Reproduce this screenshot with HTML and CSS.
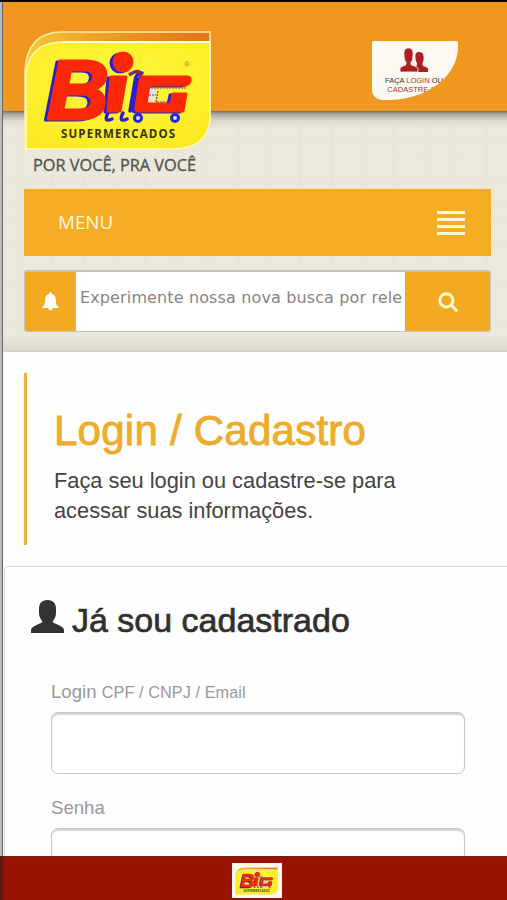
FILE: index.html
```html
<!DOCTYPE html>
<html lang="pt-BR">
<head>
<meta charset="utf-8">
<title>Big Supermercados</title>
<link rel="stylesheet" href="styles.css">
</head>
<body>
<svg width="0" height="0" class="defs">
  <defs>
    <linearGradient id="rim" x1="0" x2="1"><stop offset="0" stop-color="#f5c934"/><stop offset=".45" stop-color="#ed9a24"/><stop offset="1" stop-color="#df741b"/></linearGradient>
    <radialGradient id="badge" cx=".5" cy=".35" r=".75"><stop offset="0" stop-color="#fff83c"/><stop offset="1" stop-color="#fcea20"/></radialGradient>
    <g id="word">
      <text x="23" y="88" font-size="83" textLength="62" lengthAdjust="spacingAndGlyphs">B</text>
      <path d="M87 46H102L96 80H84Z"/>
      <circle cx="99" cy="31" r="9"/>
      <path d="M120 46H163Q167 46 166 50Q165 54 161 54H126L122 73H147L149 63H162L159 80H114Q111 80 112 76L116 50Q117 46 120 46Z"/>
    </g>
    <symbol id="logo" viewBox="0 0 188 120">
      <path d="M1 118V40Q3 1 38 1H186V88Q184 118 148 118Z" fill="url(#rim)" stroke="#fff0a0" stroke-width="1.5"/>
      <path d="M2 118V42Q6 11 39 11H186V88Q184 118 148 118Z" fill="url(#badge)" stroke="#fff8c0" stroke-width="1.5"/>
      <path d="M39 11H185" stroke="#fffef0" stroke-width="2"/>
      <g class="word-shadow"><use href="#word" x="-3" y="1"/></g>
      <path d="M106 80L111 50Q112 42 118 42M84 82Q79 92 88 88M99 82Q94 92 103 88" fill="none" stroke="#2a1fcf" stroke-width="3.5" stroke-linecap="round"/>
      <path d="M105 44Q117 36 117 46" fill="none" stroke="#8e2560" stroke-width="3.5"/>
      <g class="word-face"><use href="#word"/></g>
      <path d="M126 57H132L130 71H124Z" fill="#e9e2e8"/>
      <path d="M127 57H163M134 60L132 71H148M125 64H132" fill="none" stroke="#6b3bb0" stroke-width="1.2" stroke-dasharray="2 1"/>
      <circle cx="114" cy="87" r="3.5" fill="#d7dafc" stroke="#2525dd" stroke-width="3"/>
      <circle cx="151" cy="87" r="3.5" fill="#d7dafc" stroke="#2525dd" stroke-width="3"/>
      <text class="trade" x="160" y="36">®</text>
      <text class="market" x="37" y="107" textLength="114">SUPERMERCADOS</text>
    </symbol>
    <symbol id="person" viewBox="0 0 33 33">
      <path d="M16.5 0C11 0 8 3.5 8 8.5V13C8 17 10 19.500 11.500 21.500C11 24 0 25.500 0 30V33H33V30C33 25.500 22 24 21.500 21.500C23 19.500 25 17 25 13V8.500C25 3.500 22 0 16.500 0Z"/>
    </symbol>
  </defs>
</svg>
<div class="screen">
  <header class="header">
    <div class="banner">
      <div class="brand">
        <svg class="logo"><use href="#logo"/></svg>
        <svg class="tagline" viewBox="0 0 188 26"><text x="9" y="18" textLength="163" lengthAdjust="spacingAndGlyphs">POR VOCÊ, PRA VOCÊ</text></svg>
      </div>
      <a class="account">
        <svg class="people" viewBox="0 0 28 25">
          <path d="M19 4C16 4 15 6 15.500 10C15.500 13 16.500 14 17 15V17C16 18 16 19 16 24H28V21C28 19 22.500 18.500 22.500 17V15C23.500 13 24 11 23.500 8C23.500 5 21.500 4 19 4Z"/>
          <path class="front" d="M8.500 0C5 0 3.500 2.500 4 7C4 11 5 13 6 14V16.500C5 18 0 18 0 21V24H18V21C18 18 12 18 11 16.500V14C12.500 13 13 11 13 7C13.500 2.500 12 0 8.500 0Z"/>
        </svg>
        <span>FAÇA <em>LOGIN</em> OU</span>
        <em>CADASTRE-SE</em>
      </a>
    </div>
    <nav class="menu">
      <span class="label">MENU</span>
      <span class="bars"><i></i><i></i><i></i><i></i></span>
    </nav>
    <div class="search">
      <span class="bell"><svg viewBox="0 0 16 19"><path d="M8 0C6.800 0 6.600 1 6.700 2C4 2.500 2.500 5 2.500 8C2.500 12 2 13 0 14.500V16H16V14.500C14 13 13.500 12 13.500 8C13.500 5 12 2.500 9.300 2C9.400 1 9.200 0 8 0ZM5.500 16H10.500Q8 21 5.500 16Z"/></svg></span>
      <input type="text" placeholder="Experimente nossa nova busca por rele">
      <span class="find"><svg viewBox="0 0 20 20"><circle cx="8" cy="8" r="6.300"/><path d="M12.700 12.700L17.500 17.500"/></svg></span>
    </div>
  </header>
  <main>
    <section class="intro">
      <h1>Login / Cadastro</h1>
      <p>Faça seu login ou cadastre-se para<br>acessar suas informações.</p>
    </section>
    <section class="panel">
      <h2><svg class="user"><use href="#person"/></svg>Já sou cadastrado</h2>
      <form>
        <label for="login">Login <small>CPF / CNPJ / Email</small></label>
        <input id="login" type="text">
        <label for="senha">Senha</label>
        <input id="senha" type="password">
      </form>
    </section>
  </main>
  <footer class="footer"><span><svg><use href="#logo"/></svg></span></footer>
</div>
</body>
</html>
```
FILE: styles.css
```css
* { box-sizing: border-box; }
body { margin: 0; height: 900px; overflow: hidden; font-family: "Liberation Sans", Arial, sans-serif; color: #333; }
.defs { position: absolute; }
.screen {
  height: 900px; display: flex; flex-direction: column;
  border-top: 2px solid #0c0500; padding-left: 3px;
  background: linear-gradient(90deg, #bbb 2px, #666 2px, #666 3px, #fefefe 3px);
}
.header {
  height: 350px; flex: none; padding: 0 16px 0 21px;
  border-bottom: 1px solid #d2d1c5;
  background:
    linear-gradient(#f0951f, #f0981f) 0 0 / 100% 109px no-repeat,
    linear-gradient(#6c6a62, #aaa89d 3px, #dcdacd 10px, transparent 18px) 0 109px / 100% 30px no-repeat,
    linear-gradient(transparent 332px, #dad9cb 350px),
    repeating-linear-gradient(90deg, transparent 0 17px, #e1dfd150 18px 19px, transparent 20px 31px),
    repeating-linear-gradient(0deg, transparent 0 7px, #f1eee050 8px 9px, transparent 10px 13px),
    #eae8da;
}
.banner { height: 187px; display: flex; justify-content: space-between; align-items: flex-start; }
.brand { padding-top: 29px; width: 188px; }
.brand svg { display: block; width: 188px; }
.logo { height: 120px; }
.tagline { height: 26px; margin-top: 2px; font: 17px "Open Sans", sans-serif; fill: #55554f; stroke: #55554f; stroke-width: .35; }
.word-shadow, .word-face { font-family: "Liberation Sans", Arial, sans-serif; font-weight: bold; font-style: italic; stroke-linejoin: round; }
.word-shadow { fill: #2b20cd; stroke: #2b20cd; stroke-width: 3; }
.word-face { fill: #fb2808; stroke: #fb2808; stroke-width: 3; }
.trade { font: 8px "Liberation Sans", sans-serif; fill: #d85a70; }
.market { font: bold 11.5px "Open Sans", sans-serif; fill: #39330b; }
.account {
  width: 86px; height: 59px; margin: 39px 33px 0 0; padding: 7px 2px 0 0;
  display: flex; flex-direction: column; align-items: center; overflow: hidden;
  background: #fbf9f2; border-radius: 2px 2px 70px 10px / 2px 2px 53px 10px;
  font-size: 7.5px; line-height: 9px; color: #333; white-space: nowrap;
}
.account em { font-style: normal; color: #a8373b; }
.people { width: 28px; height: 25px; margin-bottom: 3px; fill: #ae1f25; flex: none; }
.people .front { stroke: #fbf9f2; stroke-width: .8; }
.menu {
  height: 67px; padding: 0 26px 0 34px; display: flex; justify-content: space-between; align-items: center;
  background: #f4ad24; color: #fff8dc; font: 18.8px "Open Sans", sans-serif;
}
.label { padding-bottom: 2px; }
.bars { width: 28px; display: flex; flex-direction: column; gap: 4px; }
.bars i { height: 3px; background: #fff8dc; }
.search {
  height: 62px; margin-top: 14px; display: flex; border: 1px solid #c5c4bd; border-top-width: 2px; border-radius: 3px; overflow: hidden;
}
.bell, .find { display: flex; align-items: center; justify-content: center; background: #f3aa23; }
.bell { width: 51px; border-right: 1px solid #c6baa0; }
.bell svg { width: 17px; height: 19px; fill: #fffefa; }
.find { width: 85px; padding: 2px 0 0 2px; }
.find svg { width: 21px; height: 21px; fill: none; stroke: #fff7da; stroke-width: 2.8; stroke-linecap: round; }
.search input { flex: 1; min-width: 0; border: 0; padding: 0 0 9px 4px; background: #fff; font: 16px "DejaVu Sans", sans-serif; letter-spacing: .13px; }
.search input::placeholder { color: #858585; opacity: 1; }
main { flex: 1; min-height: 0; overflow: hidden; }
.intro { height: 172px; margin: 21px 0 0 21px; padding: 34px 0 0 27px; border-left: 3px solid #eab13c; }
h1 { margin: 0; font-size: 42px; line-height: 48px; font-weight: 400; color: #edac2b; -webkit-text-stroke: .9px #edac2b; letter-spacing: .25px; }
.intro p { margin: 11px 0 0; font-size: 21.8px; line-height: 30px; color: #444; }
.panel { height: 320px; margin: 21px 0 0 1px; padding: 31px 43px 0 26px; border: 1px solid #ddd; border-right: 0; border-radius: 4px 0 0 0; }
h2 { margin: 0; height: 44px; display: flex; align-items: center; gap: 8px; font-size: 34px; line-height: 44px; font-weight: 400; color: #303030; -webkit-text-stroke: .7px #303030; }
.user { width: 33px; height: 33px; margin-bottom: 7px; fill: #333; }
form { padding-left: 20px; }
label { display: block; height: 24px; font-size: 18.6px; line-height: 24px; color: #999; }
form label:first-child { margin-top: 38px; }
label small { font-size: 16.3px; letter-spacing: .06px; }
form input { display: block; width: 414px; height: 62px; margin: 8px 0 22px; border: 1px solid #c8c8c8; border-radius: 7px; background: #fff; box-shadow: inset 0 2px 1px #d5d5d5; }
.footer { height: 44px; flex: none; display: flex; justify-content: center; align-items: center; margin-left: -3px; padding: 4px 0 0 3px; background: #991400; border-top: 1px solid #692018; border-left: 3px solid #5e1711; }
.footer span { width: 50px; height: 35px; display: flex; align-items: center; justify-content: center; background: #fff7e9; }
.footer svg { width: 43px; height: 28px; }
```
